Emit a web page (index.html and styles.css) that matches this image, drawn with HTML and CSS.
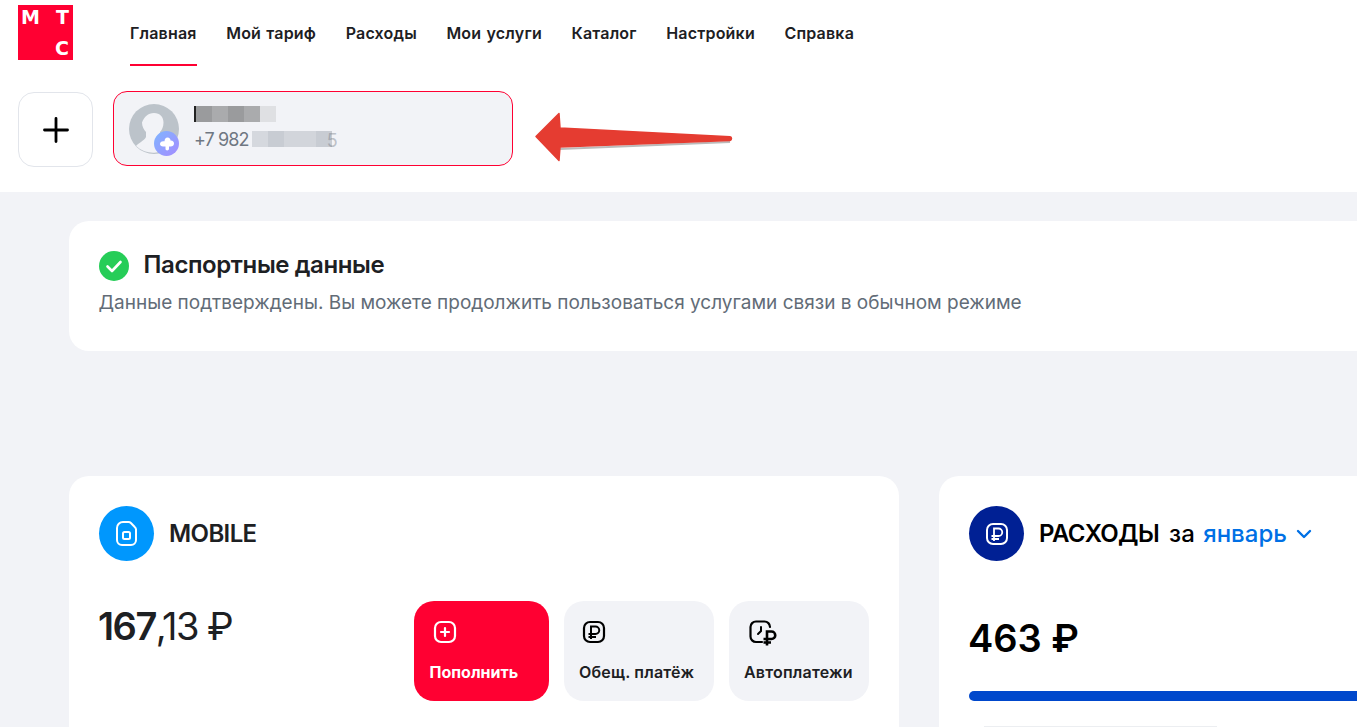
FILE: index.html
```html
<!DOCTYPE html>
<html lang="ru">
<head>
    <meta charset="UTF-8">
    <title>Мой МТС</title>
    <link rel="stylesheet" href="styles.css">
</head>
<body>
    <header class="top">
        <div class="top-row">
            <div class="logo">
                <div class="logo-line"><span>М</span><span>Т</span></div>
                <div class="logo-line end"><span>С</span></div>
            </div>
            <nav class="nav">
                <a class="nav-item active">Главная</a>
                <a class="nav-item">Мой тариф</a>
                <a class="nav-item">Расходы</a>
                <a class="nav-item">Мои услуги</a>
                <a class="nav-item">Каталог</a>
                <a class="nav-item">Настройки</a>
                <a class="nav-item">Справка</a>
            </nav>
        </div>
        <div class="account-row">
            <button class="add-btn" aria-label="Добавить">
                <svg width="26" height="26" viewBox="0 0 26 26"><path d="M13 1.500v23M1.500 13h23" stroke="#000" stroke-width="2.800" stroke-linecap="round"/></svg>
            </button>
            <div class="account">
                <div class="avatar">
                    <svg width="50" height="50" viewBox="0 0 50 50">
                        <circle cx="25" cy="25" r="25" fill="#bcc3ca"/>
                        <path d="M25 9c6 0 9.500 4 9.500 9.500 0 4-1.500 7.500-3.500 9.500v5c3 3 9 4 12 7a25 25 0 0 1-36 2c2-3 8-5 10-9v-5c-2-2-4-5.500-4-9.500C15 13 19 9 25 9z" fill="#f2f3f7"/>
                    </svg>
                    <span class="badge">
                        <svg width="16" height="16" viewBox="0 0 16 16"><path d="M8.500 1.500c2 0 3 1.400 3 3 2.200-.2 3.500 1.200 3.500 3s-1.400 3-3.300 3H10v2.300c0 1.100-.9 1.700-1.800 1.700S6.500 13.900 6.500 12.800V10.500H4C2.300 10.500 1 9.400 1 8s1.300-2.700 3.200-2.700H5.500C5.500 3 6.800 1.500 8.500 1.500z" fill="#fff"/></svg>
                    </span>
                </div>
                <div class="account-text">
                    <div class="account-name">
                        <i class="caret"></i><i class="px p1"></i><i class="px p2"></i><i class="px p1"></i><i class="px p2"></i><i class="px p3"></i>
                    </div>
                    <div class="account-phone">
                        <span>+7 982</span>
                        <span class="phone-blur">
                            <i class="px-s s1"></i><i class="px-s s2"></i><i class="px-s s3"></i><i class="px-s s3"></i><i class="px-s s2"></i><b>5</b>
                        </span>
                    </div>
                </div>
            </div>
        </div>
        <svg class="arrow" width="200" height="52" viewBox="0 0 200 52">
            <path d="M27 37 197 30" stroke="#bbb" stroke-width="2" fill="none"/>
            <path d="M26 1.500 3 24.500 26 48.500 27 35 197 28.500c2-.3 2-3.500 0-3.800L27 16z" fill="#e53c31" stroke="#e53c31" stroke-width="1.500" stroke-linejoin="round"/>
        </svg>
    </header>

    <main class="content">
        <section class="card passport">
            <div class="passport-title">
                <svg width="30" height="30" viewBox="0 0 30 30">
                    <circle cx="15" cy="15" r="15" fill="#26cd58"/>
                    <path d="M8.500 15.500l4.500 4.500 8.500-9" stroke="#fff" stroke-width="2.600" fill="none" stroke-linecap="round" stroke-linejoin="round"/>
                </svg>
                <h2>Паспортные данные</h2>
            </div>
            <p>Данные подтверждены. Вы можете продолжить пользоваться услугами связи в обычном режиме</p>
        </section>

        <div class="columns">
            <section class="card mobile">
                <div class="card-head">
                    <span class="round-icon sky">
                        <svg width="21" height="25" viewBox="0 0 21 25">
                            <path d="M7 1h5.500c1 0 1.700.3 2.400 1l3.600 3.800c.7.700 1.500 1.500 1.500 2.400V19a5 5 0 0 1-5 5H6a5 5 0 0 1-5-5V7a6 6 0 0 1 6-6z" stroke="#fff" stroke-width="2" fill="none"/>
                            <rect x="7" y="11" width="7" height="7" rx="1.500" stroke="#fff" stroke-width="2" fill="none"/>
                        </svg>
                    </span>
                    <h3>MOBILE</h3>
                </div>
                <div class="mobile-body">
                    <div class="balance"><b>167</b>,13 ₽</div>
                    <div class="actions">
                        <a class="action red">
                            <svg width="24" height="24" viewBox="0 0 24 24"><rect x="2" y="2" width="20" height="20" rx="6" stroke="#fff" stroke-width="2.200" fill="none"/><path d="M12 8v8M8 12h8" stroke="#fff" stroke-width="2.200" stroke-linecap="round"/></svg>
                            <span>Пополнить</span>
                        </a>
                        <a class="action promise">
                            <svg width="24" height="24" viewBox="0 0 24 24"><rect x="2" y="2" width="20" height="20" rx="6" stroke="#000" stroke-width="2.200" fill="none"/><path d="M9 19V6.500h4.500a3.700 3.700 0 0 1 0 7.500H6.500M6.500 17H14" stroke="#000" stroke-width="2" fill="none"/></svg>
                            <span>Обещ. платёж</span>
                        </a>
                        <a class="action auto">
                            <svg width="28" height="26" viewBox="0 0 28 26"><path d="M13 22H7a5.500 5.500 0 0 1-5.500-5.500V7A5.500 5.500 0 0 1 7 1.500h8.500A5.500 5.500 0 0 1 21 7" stroke="#000" stroke-width="2.200" fill="none" stroke-linecap="round"/><path d="M12 7v4l-3 3" stroke="#000" stroke-width="2" fill="none" stroke-linecap="round"/><path d="M18 25.500V11.500h4.500a3.700 3.700 0 0 1 0 7.500H14.500M14.500 22.500h7.500" stroke="#000" stroke-width="2.600" fill="none"/></svg>
                            <span>Автоплатежи</span>
                        </a>
                    </div>
                </div>
            </section>

            <section class="card expenses">
                <div class="card-head">
                    <span class="round-icon navy">
                        <svg width="24" height="24" viewBox="0 0 24 24"><rect x="2" y="2" width="20" height="20" rx="6" stroke="#fff" stroke-width="2" fill="none"/><path d="M9 19V6.500h4.500a3.700 3.700 0 0 1 0 7.500H6.500M6.500 17H14" stroke="#fff" stroke-width="1.800" fill="none"/></svg>
                    </span>
                    <h3>РАСХОДЫ</h3>
                    <span class="period">за <span class="month">январь</span></span>
                    <svg class="chevron" width="16" height="10" viewBox="0 0 16 10"><path d="M2 2l6 6 6-6" stroke="#0070e5" stroke-width="2.400" fill="none" stroke-linecap="round" stroke-linejoin="round"/></svg>
                </div>
                <div class="total">463 ₽</div>
                <div class="bar"></div>
                <div class="bar-line"></div>
            </section>
        </div>
    </main>
</body>
</html>
```

FILE: styles.css
```css
* {
    box-sizing: border-box;
}

html, body {
    margin: 0;
    height: 727px;
    overflow: hidden;
}

body {
    background: #f2f3f7;
    font-family: Inter, "Noto Sans", sans-serif;
    color: #1d2023;
}

/* Header */
.top {
    position: relative;
    background: #fff;
    height: 192px;
    padding: 5px 18px 0;
}

.top-row {
    display: flex;
    height: 61px;
}

.logo {
    width: 55px;
    height: 55px;
    padding: 2px 4px 2px 3px;
    background: #ff0032;
    display: flex;
    flex-direction: column;
    justify-content: space-between;
    color: #fff;
    font-family: "DejaVu Sans", sans-serif;
    font-weight: 700;
    font-size: 19px;
    line-height: 20px;
}

.logo-line {
    display: flex;
    justify-content: space-between;
}

.logo-line.end {
    justify-content: flex-end;
}

.nav {
    display: flex;
    gap: 29.500px;
    margin-left: 57px;
}

.nav-item {
    display: block;
    height: 61px;
    padding-top: 18px;
    font-size: 16px;
    line-height: 20px;
    font-weight: 600;
    letter-spacing: 0.2px;
    word-spacing: 1px;
    color: #1d2023;
}

.nav-item.active {
    border-bottom: 2px solid #ff0032;
}

.account-row {
    display: flex;
    align-items: flex-start;
    gap: 20px;
    margin-top: 25px;
}

.add-btn {
    width: 75px;
    height: 75px;
    margin-top: 1px;
    background: #fff;
    border: 1px solid #e2e5eb;
    border-radius: 16px;
    display: flex;
    align-items: center;
    justify-content: center;
    padding: 0;
}

.account {
    width: 400px;
    height: 75px;
    display: flex;
    gap: 15px;
    align-items: center;
    padding: 0 15px;
    background: #f2f3f7;
    border: 1px solid #ff0032;
    border-radius: 14px;
}

.avatar {
    position: relative;
    width: 50px;
    height: 50px;
    margin-top: 1px;
}

.avatar > svg {
    display: block;
}

.badge {
    position: absolute;
    right: 0;
    bottom: -2px;
    width: 25px;
    height: 25px;
    border-radius: 50%;
    background: linear-gradient(135deg, #7fb5ff, #a58cff);
    display: flex;
    align-items: center;
    justify-content: center;
}

.account-name {
    display: flex;
    height: 16px;
    margin-bottom: 8px;
}

.caret {
    width: 2px;
    height: 16px;
    background: #222;
}

.px {
    width: 16px;
    height: 16px;
}

.p1 { background: #9a9b9d; }
.p2 { background: #aaabad; }
.p3 { background: #dfe0e3; }

.account-phone {
    display: flex;
    gap: 3px;
    font-size: 18px;
    line-height: 20px;
    color: #6f7782;
    letter-spacing: -0.9px;
}

.phone-blur {
    display: flex;
    align-items: flex-start;
    margin-top: 1px;
}

.phone-blur b {
    font-weight: 400;
    margin-left: -5px;
    opacity: 0.4;
}

.px-s {
    width: 16px;
    height: 16px;
}

.s1 { background: #d5d8de; }
.s2 { background: #c8ccd3; }
.s3 { background: #d2d5db; }

.arrow {
    position: absolute;
    left: 533px;
    top: 112px;
}

/* Content */
.content {
    padding: 29px 0 0 69px;
    width: 1500px;
}

.card {
    background: #fff;
    border-radius: 20px;
}

.passport {
    height: 130px;
    padding: 30px 30px 0 29.500px;
}

.passport-title {
    display: flex;
    align-items: center;
    gap: 15px;
}

.passport h2 {
    margin: 0 0 2px;
    font-size: 24px;
    line-height: 28px;
    font-weight: 600;
    letter-spacing: -0.4px;
}

.passport p {
    margin: 10px 0 0;
    font-size: 19px;
    line-height: 24px;
    color: #626c77;
}

.columns {
    display: grid;
    grid-template-columns: 830px 1fr;
    gap: 40px;
    margin-top: 125px;
}

.mobile, .expenses {
    height: 300px;
    padding: 30px;
}

.card-head {
    display: flex;
    align-items: center;
    height: 55px;
}

.round-icon {
    width: 55px;
    height: 55px;
    border-radius: 50%;
    margin-right: 15px;
    display: flex;
    align-items: center;
    justify-content: center;
}

.sky { background: #0097fd; }
.navy { background: #002094; }

.card-head h3 {
    margin: 0;
    font-size: 24px;
    font-weight: 600;
    letter-spacing: -0.6px;
}

.mobile-body {
    display: flex;
    justify-content: space-between;
    margin-top: 40px;
}

.balance {
    font-size: 38px;
    line-height: 50px;
    letter-spacing: -1.500px;
    margin-left: -1px;
}

.balance b {
    font-weight: 600;
}

.actions {
    display: flex;
    gap: 15px;
}

.action {
    display: flex;
    flex-direction: column;
    justify-content: space-between;
    align-items: flex-start;
    height: 100px;
    border-radius: 20px;
    background: #f2f3f7;
    padding: 19px 15px 19px;
    font-size: 16px;
    line-height: 20px;
    font-weight: 600;
    letter-spacing: 0.2px;
}

.action svg {
    display: block;
    margin-left: 3px;
}

.action span {
    white-space: nowrap;
}

.action.auto svg {
    margin-left: 5px;
}

.action.red {
    width: 135px;
    padding-left: 15.500px;
    background: #ff0032;
    color: #fff;
    font-weight: 700;
    letter-spacing: 0;
}

.action.promise { width: 150px; }
.action.auto { width: 140px; }

.expenses {
    color: #000;
}

.period {
    margin-left: 10px;
    font-size: 24px;
    font-weight: 500;
}

.month {
    color: #0070e5;
    margin-left: 2px;
}

.chevron {
    margin-left: 9px;
}

.total {
    margin-top: 52px;
    margin-left: -1px;
    font-size: 38px;
    line-height: 50px;
    font-weight: 600;
}

.bar {
    height: 10px;
    margin-top: 28px;
    border-radius: 5px 0 0 5px;
    background: #0048cc;
}

.bar-line {
    width: 233px;
    height: 1px;
    margin: 25px 0 0 15px;
    background: #eceef1;
}
```
